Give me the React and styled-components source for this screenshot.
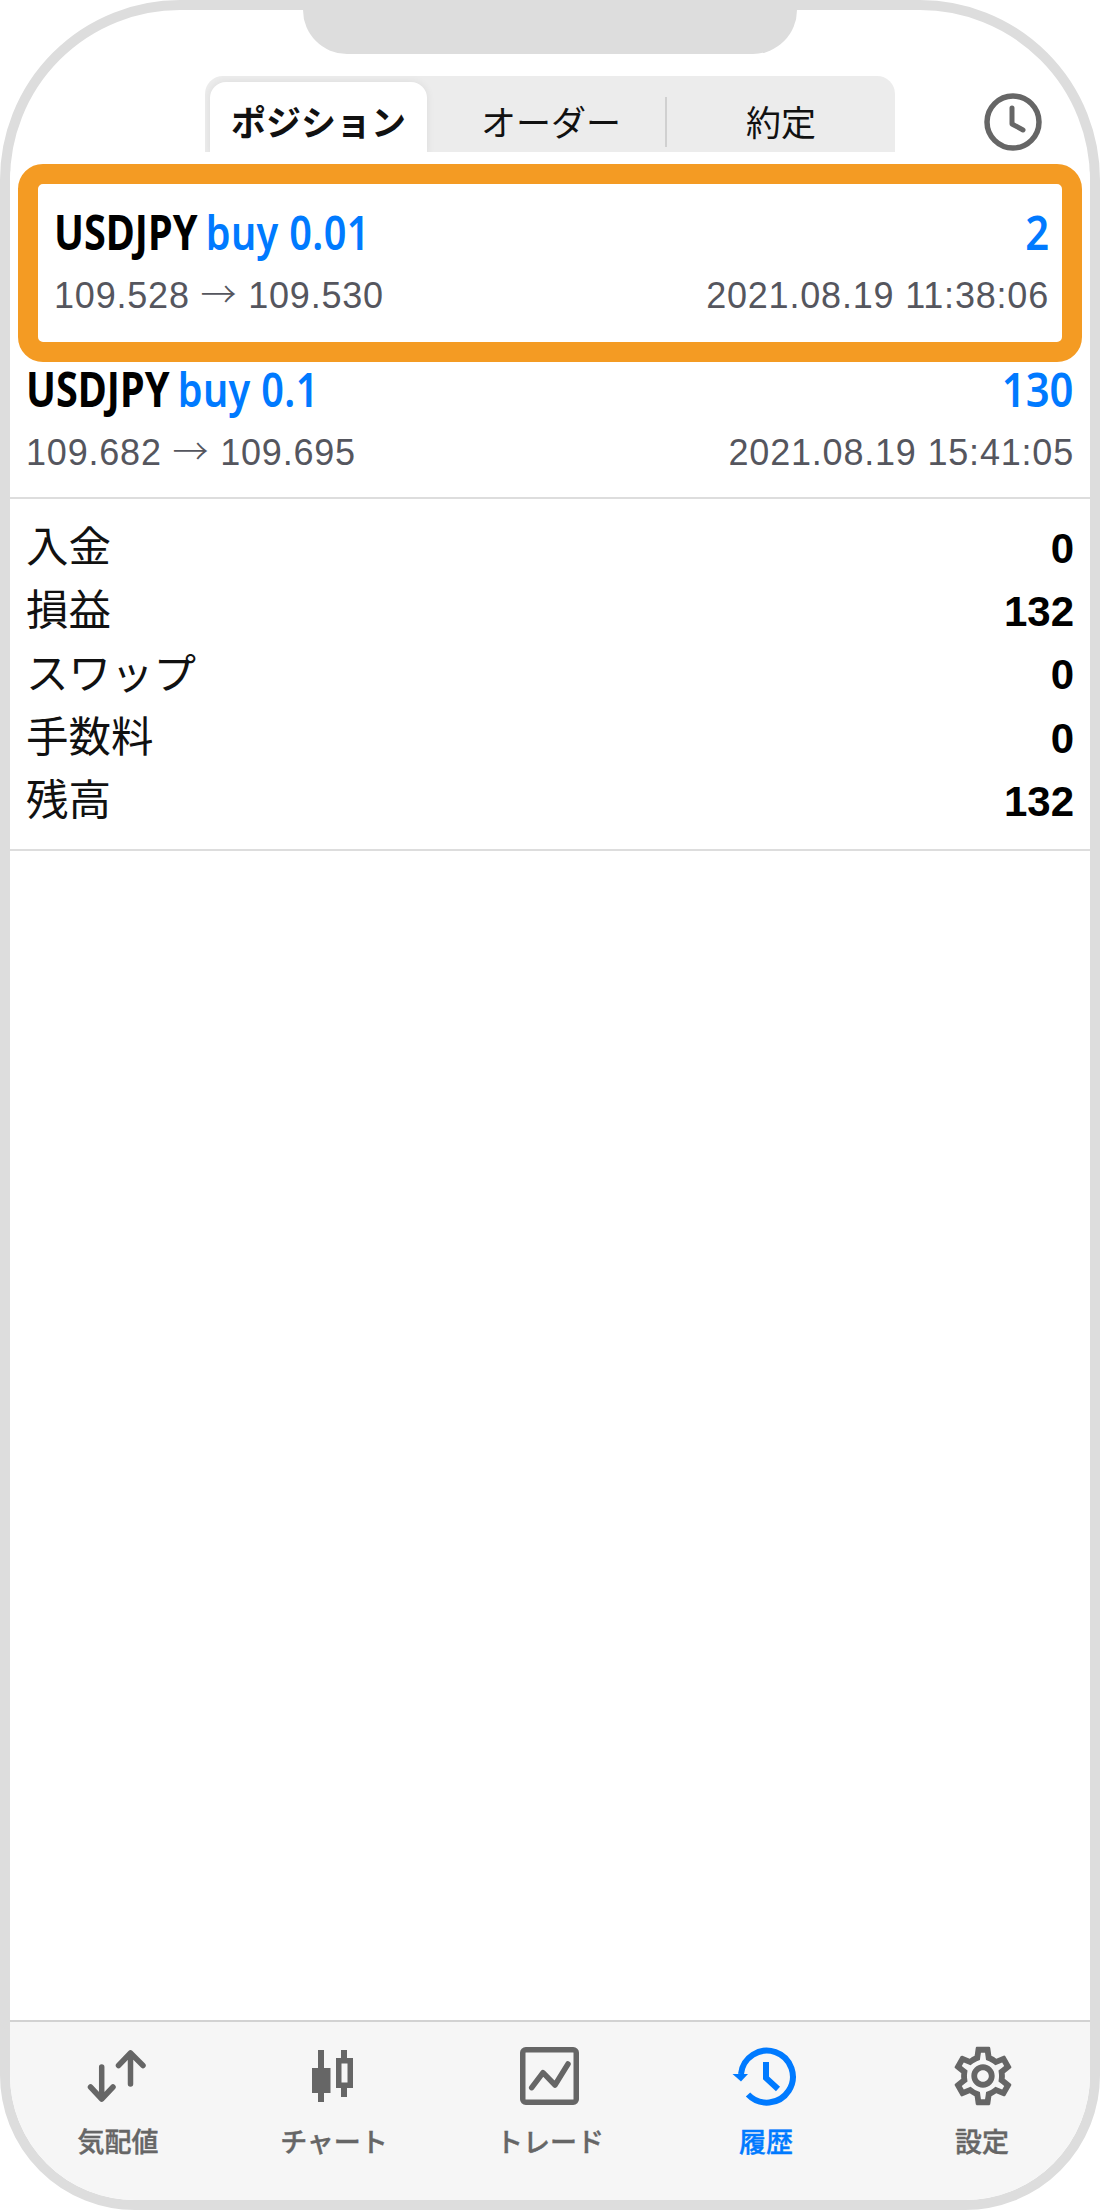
import React from 'react';
import styled, { createGlobalStyle } from 'styled-components';
import { MdOutlineSettings } from 'react-icons/md';

const GlobalStyle = createGlobalStyle`
  html, body {
    margin: 0;
    padding: 0;
    background: #fff;
  }
  body {
    font-family: "Liberation Sans", "Noto Sans CJK JP", sans-serif;
  }
`
const Phone = styled.div`
  box-sizing: border-box;
  width: 1100px;
  height: 2210px;
  border: 10px solid #ddd;
  border-radius: 180px 180px 135px 135px;
  overflow: hidden;
  background: #fff;
  display: flex;
  flex-direction: column;
`
const Notch = styled.div`
  flex: none;
  width: 494px;
  height: 44px;
  margin: 0 auto;
  background: #ddd;
  border-radius: 0 0 44px 44px;
`
const Header = styled.div`
  flex: none;
  display: grid;
  grid-template-columns: 195px 690px 195px;
  height: 76px;
  margin-top: 22px;
`
const Tabs = styled.div`
  grid-column: 2;
  display: grid;
  grid-template-columns: 217px 238px 2px 228px;
  padding: 6px 0 0 5px;
  background: #ececec;
  border-radius: 18px 18px 0 0;
  overflow: hidden;
`
const Tab = styled.div`
  display: flex;
  align-items: center;
  justify-content: center;
  padding: 3px 0 0 ${(p) => p.$pad || 0}px;
  font-family: "Noto Sans CJK JP", sans-serif;
  font-size: 35px;
  font-weight: ${(p) => (p.$active ? 700 : 400)};
  color: #111;
  background: ${(p) => (p.$active ? '#fff' : 'transparent')};
  border-radius: 16px 16px 0 0;
  box-shadow: ${(p) => (p.$active ? '0 0 8px rgba(0, 0, 0, 0.07)' : 'none')};
`
const TabDivider = styled.div`
  height: 50px;
  margin-top: 15px;
  background: #d0d0d0;
`
const ClockButton = styled.div`
  grid-column: 3;
  padding: 17px 0 0 89px;
`
const Highlight = styled.div`
  position: relative;
  flex: none;
  box-sizing: border-box;
  height: 198px;
  margin: 12px 8px 0;
  padding: 22px 13px 0 16px;
  background: #fff;
  border: 20px solid #f49b23;
  border-radius: 25px;
  box-shadow: 0 0 0 12px #fff;
`
const PlainTrade = styled.div`
  position: relative;
  flex: none;
  box-sizing: border-box;
  height: 137px;
  padding: 1px 16px 0 16px;
  border-bottom: 2px solid #ddd;
`
const TitleRow = styled.div`
  display: flex;
  justify-content: space-between;
  align-items: baseline;
  height: 52px;
  line-height: 52px;
  font-family: "Noto Sans", sans-serif;
  font-size: 47.5px;
  white-space: nowrap;
`
/* the pair and the profit are set in a narrow face in the app */
const TitleText = styled.span`
  display: inline-block;
  transform: scaleX(${(p) => p.$squeeze});
  transform-origin: ${(p) => (p.$end ? 'right' : 'left')} center;
`
const Symbol = styled.span`
  font-weight: 700;
  color: #000;
  margin-right: 10px;
`
const Side = styled.span`
  font-weight: 600;
  color: #007aff;
  letter-spacing: 0.4px;
`
const Profit = styled.span`
  font-weight: 600;
  color: #007aff;
`
const MetaRow = styled.div`
  display: flex;
  justify-content: space-between;
  margin-top: 16px;
  font-size: 36px;
  line-height: 44px;
  letter-spacing: 0.8px;
  color: #55565e;
`
const Arrow = styled.span`
  font-family: "Noto Sans CJK JP", sans-serif;
  font-weight: 300;
  line-height: 0;
`
const Ledger = styled.div`
  flex: none;
  padding: 15.5px 16px 18px 16px;
  border-bottom: 2px solid #ddd;
`
const LedgerRow = styled.div`
  display: flex;
  justify-content: space-between;
  align-items: center;
  height: 63.3px;
`
const LedgerLabel = styled.span`
  padding-bottom: 5px;
  font-family: "Noto Sans CJK JP", sans-serif;
  font-size: 42.5px;
  color: #111;
`
const LedgerValue = styled.span`
  padding-top: 5px;
  font-size: 42px;
  font-weight: 700;
  color: #000;
`
const Spacer = styled.div`
  flex: 1;
`
const Nav = styled.nav`
  flex: none;
  display: grid;
  grid-template-columns: repeat(5, 1fr);
  height: 180px;
  box-sizing: border-box;
  padding-top: 25px;
  background: #f6f6f6;
  border-top: 2px solid #d2d2d2;
`
const NavItem = styled.div`
  display: flex;
  flex-direction: column;
  align-items: center;
  color: ${(p) => (p.$active ? '#007aff' : '#666')};
`
const NavIcon = styled.div`
  display: flex;
  justify-content: center;
  height: 60px;
`
const NavLabel = styled.span`
  margin-top: 16px;
  font-family: "Noto Sans CJK JP", sans-serif;
  font-size: 27px;
  line-height: 36px;
  font-weight: 500;
  -webkit-text-stroke: 0.4px currentColor;
`
const GearIcon = styled(MdOutlineSettings)`
  margin: -6px 0 0 2px;
`

const ClockIcon = () => (
  <svg width="58" height="58" viewBox="0 0 58 58" fill="none" stroke="#666" strokeLinecap="round" strokeLinejoin="round">
    <circle cx="29" cy="29" r="26" strokeWidth="5.5" />
    <path d="M28 15v16l11 6" strokeWidth="5" />
  </svg>
);

const QuotesIcon = () => (
  <svg width="64" height="60" viewBox="0 0 64 60" fill="none" stroke="currentColor" strokeWidth="5.5" strokeLinecap="round" strokeLinejoin="round">
    <path d="M15.7 20v32M4.5 40l11.2 12 11.3-12" />
    <path d="M44.5 37V6M32.5 18.5L44.5 6l12.5 12.5" />
  </svg>
);

const ChartIcon = () => (
  <svg width="64" height="60" viewBox="0 0 64 60" fill="currentColor">
    <path d="M16 3h6v18h6.5v25H22v9h-6v-9H10V21h6z" />
    <path fillRule="evenodd" d="M39 3h6v8h6v30h-6v9h-6v-9h-5V11h5zM39.500 16.500v19h6v-19z" />
  </svg>
);

const TradeIcon = () => (
  <svg width="64" height="60" viewBox="0 0 64 60" fill="none" stroke="currentColor" strokeWidth="5.5" strokeLinecap="round" strokeLinejoin="round">
    <rect x="4.750" y="2.750" width="53.500" height="52.500" rx="3" />
    <path d="M13.700 40.700L25 25.700 37 38 50 17" />
  </svg>
);

const HistoryIcon = () => (
  <svg width="70" height="60" viewBox="0 0 70 60" fill="none" stroke="currentColor" strokeWidth="6">
    <path d="M10 27A26 26 0 1 1 17 47.500" />
    <path d="M35 15v16l12 11" />
    <path d="M1.500 27H17l-7 7.500z" fill="currentColor" stroke="none" />
  </svg>
);

const trades = [
  { pair: 'USDJPY', side: 'buy 0.01', profit: '2', from: '109.528', to: '109.530', time: '2021.08.19 11:38:06' },
  { pair: 'USDJPY', side: 'buy 0.1', profit: '130', from: '109.682', to: '109.695', time: '2021.08.19 15:41:05' },
];

const ledger = [
  { label: '入金', value: '0' },
  { label: '損益', value: '132' },
  { label: 'スワップ', value: '0' },
  { label: '手数料', value: '0' },
  { label: '残高', value: '132' },
];

const navItems = [
  { label: '気配値', icon: <QuotesIcon /> },
  { label: 'チャート', icon: <ChartIcon /> },
  { label: 'トレード', icon: <TradeIcon /> },
  { label: '履歴', icon: <HistoryIcon />, active: true },
  { label: '設定', icon: <GearIcon size={70} /> },
];

function TradeBody({ trade }) {
  return (
    <>
      <TitleRow>
        <TitleText $squeeze={0.835}>
          <Symbol>{trade.pair}</Symbol>
          <Side>{trade.side}</Side>
        </TitleText>
        <TitleText $squeeze={0.88} $end>
          <Profit>{trade.profit}</Profit>
        </TitleText>
      </TitleRow>
      <MetaRow>
        <span>{trade.from} <Arrow>→</Arrow> {trade.to}</span>
        <span>{trade.time}</span>
      </MetaRow>
    </>
  );
}

function App() {
  return (
    <Phone>
      <GlobalStyle />
      <Notch />
      <Header>
        <Tabs>
          <Tab $active>ポジション</Tab>
          <Tab $pad={10}>オーダー</Tab>
          <TabDivider />
          <Tab>約定</Tab>
        </Tabs>
        <ClockButton>
          <ClockIcon />
        </ClockButton>
      </Header>
      <Highlight>
        <TradeBody trade={trades[0]} />
      </Highlight>
      <PlainTrade>
        <TradeBody trade={trades[1]} />
      </PlainTrade>
      <Ledger>
        {ledger.map((row) => (
          <LedgerRow key={row.label}>
            <LedgerLabel>{row.label}</LedgerLabel>
            <LedgerValue>{row.value}</LedgerValue>
          </LedgerRow>
        ))}
      </Ledger>
      <Spacer />
      <Nav>
        {navItems.map((item) => (
          <NavItem key={item.label} $active={item.active}>
            <NavIcon>{item.icon}</NavIcon>
            <NavLabel>{item.label}</NavLabel>
          </NavItem>
        ))}
      </Nav>
    </Phone>
  );
}

export default App;
